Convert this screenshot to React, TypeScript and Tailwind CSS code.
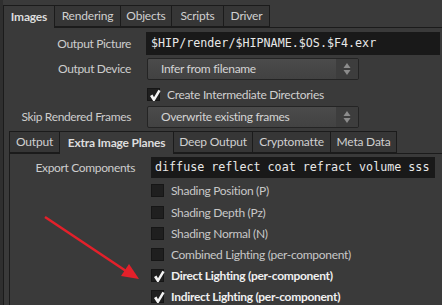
import React from "react";

// Houdini ROP-Parameterpanel: Images-Tab mit Unterreiter "Extra Image Planes".

const FONT = { fontFamily: "Lato, 'Noto Sans', sans-serif" };
const MONO = { fontFamily: "'DejaVu Sans Mono', 'Liberation Mono', monospace" };

type Tab = { name: string; w: string; aktiv?: boolean };

const OBEN: Tab[] = [
  { name: "Images", w: "w-[52px]", aktiv: true },
  { name: "Rendering", w: "w-[66px]" },
  { name: "Objects", w: "w-[51px]" },
  { name: "Scripts", w: "w-[52px]" },
  { name: "Driver", w: "w-[46px]" },
];

const UNTEN: Tab[] = [
  { name: "Output", w: "w-[51px]" },
  { name: "Extra Image Planes", w: "w-[114px]", aktiv: true },
  { name: "Deep Output", w: "w-[79px]" },
  { name: "Cryptomatte", w: "w-[78px]" },
  { name: "Meta Data", w: "w-[66px]" },
];

const PLANES = [
  { label: "Shading Position (P)", an: false, mt: "mt-[6px]" },
  { label: "Shading Depth (Pz)", an: false, mt: "mt-[9px]" },
  { label: "Shading Normal (N)", an: false, mt: "mt-[8px]" },
  { label: "Combined Lighting (per-component)", an: false, mt: "mt-[8px]" },
  { label: "Direct Lighting (per-component)", an: true, mt: "mt-[8px]" },
  { label: "Indirect Lighting (per-component)", an: true, mt: "mt-[8px]" },
];

const LABEL = "text-right text-[12px] tracking-[-0.35px] text-[#cdcdcd]";

function Reiter({ tabs }: { tabs: Tab[] }) {
  return (
    <div className="flex h-[22px]">
      {tabs.map((t, i) => (
        <div
          key={t.name}
          className={`${t.w} flex items-center justify-center border-t border-r border-[#1b1b1b] text-[12px] tracking-[-0.2px] ${
            i === 0 ? "border-l" : ""
          } ${
            t.aktiv
              ? "relative z-10 h-[23px] bg-[#3a3a3a] font-bold text-[#dddddd]"
              : "h-[22px] border-b bg-[#363636] text-[#d0d0d0]"
          }`}
        >
          {t.name}
        </div>
      ))}
    </div>
  );
}

function Haken() {
  return (
    <svg width="13" height="13" viewBox="0 0 13 13" className="absolute left-0 top-0 overflow-visible">
      <path d="M2 7 L4.5 5.6 L6 8.2 L10.4 0.8 L12.6 2 L6.6 12 L5.2 12 Z" fill="#f4f4f4" />
    </svg>
  );
}

function Kasten({ an }: { an: boolean }) {
  return (
    <div className="relative h-[13px] w-[13px] shrink-0 border border-[#161616] bg-[#1f1f1f]">
      {an && <Haken />}
    </div>
  );
}

function Auswahl({ text }: { text: string }) {
  return (
    <div className="ml-px flex h-[22px] w-[212px] overflow-hidden rounded-[2px] border border-[#242424] bg-gradient-to-b from-[#4b4b4b] to-[#424242]">
      <div className="flex flex-1 items-center pl-[13px] text-[12px] tracking-[-0.3px] text-[#d4d4d4]">{text}</div>
      <div className="flex w-[22px] items-center justify-center bg-[#3d3d3d]">
        <svg width="8" height="14" viewBox="0 0 8 14">
          <path d="M4 1 L7.5 6 L0.5 6 Z" fill="#8c8c8c" />
          <path d="M4 13 L7.5 8 L0.5 8 Z" fill="#8c8c8c" />
        </svg>
      </div>
    </div>
  );
}

export default function App() {
  return (
    <div className="relative h-[305px] w-[442px] overflow-hidden bg-[#3a3a3a] leading-none" style={FONT}>
      <div className="flex h-full">
        <div className="w-[3px] shrink-0 bg-[#2f2f2f]" />
        <div className="flex flex-1 flex-col">
          <div className="pt-[5px]">
            <Reiter tabs={OBEN} />
          </div>

          <div className="flex flex-1 flex-col border-l border-t border-[#1b1b1b] pt-[4px]">
            <div className="flex h-[23px] items-center">
              <div className={`w-[127px] ${LABEL}`}>Output Picture</div>
              <div
                className="ml-[15px] flex h-[23px] w-[294px] items-center bg-[#191919] pl-[5px] text-[11.7px] text-[#e8e8e8]"
                style={MONO}
              >
                $HIP/render/$HIPNAME.$OS.$F4.exr
              </div>
            </div>

            <div className="mt-[3px] flex h-[22px] items-center">
              <div className={`w-[127px] ${LABEL}`}>Output Device</div>
              <div className="ml-[15px]">
                <Auswahl text="Infer from filename" />
              </div>
            </div>

            <div className="mt-[8px] flex h-[13px] items-center">
              <div className="ml-[143px]">
                <Kasten an />
              </div>
              <span className="ml-[7px] text-[12px] tracking-[-0.3px] text-[#d0d0d0]">
                Create Intermediate Directories
              </span>
            </div>

            <div className="mt-[5px] flex h-[22px] items-center">
              <div className={`w-[127px] ${LABEL}`}>Skip Rendered Frames</div>
              <div className="ml-[15px]">
                <Auswahl text="Overwrite existing frames" />
              </div>
            </div>

            <div className="ml-[5px] mt-[3px] flex flex-1 flex-col">
              <Reiter tabs={UNTEN} />
              <div className="flex flex-1 flex-col border-l border-t border-[#1b1b1b] pt-[3px]">
                <div className="flex h-[21px] items-center">
                  <div className={`w-[125px] ${LABEL}`}>Export Components</div>
                  <div
                    className="ml-[16px] flex h-[21px] w-[284px] items-center bg-[#191919] pl-[4px] text-[11.7px] text-[#e8e8e8]"
                    style={MONO}
                  >
                    diffuse reflect coat refract volume sss
                  </div>
                </div>

                {PLANES.map((p) => (
                  <div key={p.label} className={`${p.mt} flex h-[13px] items-center`}>
                    <div className="ml-[141px]">
                      <Kasten an={p.an} />
                    </div>
                    <span
                      className={`ml-[7px] text-[12px] tracking-[-0.3px] ${
                        p.an ? "font-bold text-[#f0f0f0]" : "text-[#c8c8c8]"
                      }`}
                    >
                      {p.label}
                    </span>
                  </div>
                ))}
              </div>
            </div>
          </div>
        </div>
      </div>

      {/* roter Hinweispfeil */}
      <svg className="pointer-events-none absolute left-0 top-0" width="442" height="305">
        <line x1="45" y1="217" x2="126" y2="271" stroke="#e3202a" strokeWidth="2.5" />
        <path d="M139 279 L121 276 L129 264 Z" fill="#e3202a" />
      </svg>
    </div>
  );
}
